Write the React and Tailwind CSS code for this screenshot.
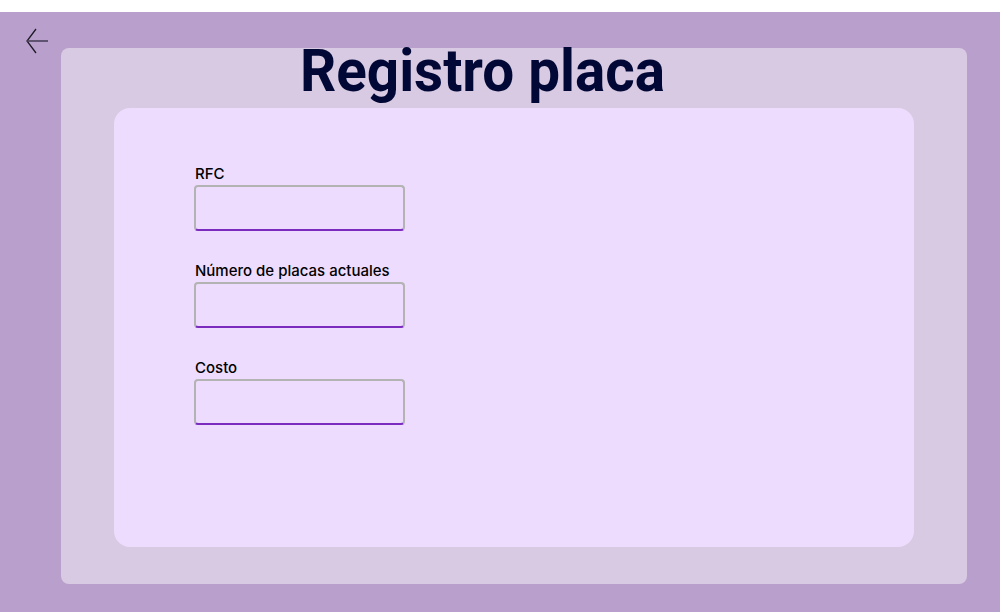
import React from "react";

function Field({ label }) {
  return (
    <div className="flex flex-col">
      <label className="block h-[17px] leading-[17px] text-[15px] font-medium text-black mb-[3px] pl-[1px]">
        {label}
      </label>
      <div className="w-[211px] h-[46px] rounded-[4px] border-2 border-[#b3b3b3] border-b-[#7b2cbf] bg-[#eedcfe]" />
    </div>
  );
}

export default function App() {
  return (
    <div className="w-[1000px] h-[612px] flex flex-col bg-white font-['Inter','Noto_Sans',sans-serif] overflow-hidden">
      <div className="h-3 bg-white" />
      <div className="relative flex-1 bg-[#b9a0cc] pl-[61px] pr-[33px] pt-[36px] pb-[28px] flex flex-col">
        <svg
          className="absolute left-[25px] top-[16px]"
          width="25"
          height="26"
          viewBox="0 0 25 26"
          fill="none"
        >
          <path d="M11 1 L2 13 L11 25" stroke="#1e1a28" strokeWidth="1.3" />
          <path d="M2 13 H23" stroke="#4a3f5a" strokeWidth="1.6" />
        </svg>
        <div className="flex-1 rounded-[8px] bg-[#d8cae2] flex flex-col pb-[37px]">
          <h1 className="mt-[-7px] ml-[239px] h-[60px] leading-none text-[60px] font-bold text-[#020836] font-['Roboto',sans-serif] whitespace-nowrap origin-left scale-x-[0.943] w-fit">
            Registro placa
          </h1>
          <div className="mt-[7px] mx-[53px] flex-1 rounded-[16px] bg-[#eedcfe] pl-[80px] pt-[57px] flex flex-col gap-[31px]">
            <Field label="RFC" />
            <Field label="Número de placas actuales" />
            <Field label="Costo" />
          </div>
        </div>
      </div>
    </div>
  );
}
